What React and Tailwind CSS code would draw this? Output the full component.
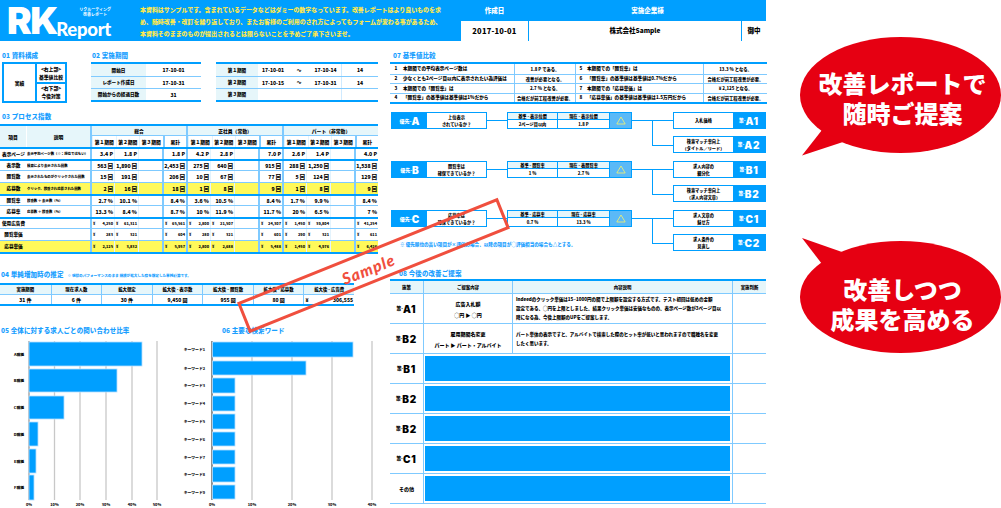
import React from "react";

const FONT = { fontFamily: '"Noto Sans CJK JP", "Noto Sans", sans-serif' };

function Title({ children, className = "" }) {
  return <div className={"text-[6.5px] leading-[8px] font-black text-[#1a9fff] whitespace-nowrap tracking-[0.1px] " + className}>{children}</div>;
}

function Plan({ code }) {
  return (
    <span className="inline-flex items-center whitespace-nowrap leading-none">
      <span className="text-[4.6px] font-black">策-</span>
      <span className="text-[10px] font-black tracking-[0.8px]" style={{ fontFamily: "Inter, sans-serif" }}>{code}</span>
    </span>
  );
}

function Header() {
  return (
    <div className="h-[41px] w-[766px] bg-[#009fff] flex">
      <div className="w-[140px] flex pl-[7px] text-white">
        <div className="w-[47px] text-[37px] leading-[40px] font-black tracking-[-1.5px] mt-[1px]" style={{ fontFamily: "Inter, sans-serif" }}>RK</div>
        <div className="ml-[5px] flex flex-col items-end w-[52px]">
          <div className="text-[4px] leading-[6px] font-bold mt-[6px] whitespace-nowrap">リクルーティング</div>
          <div className="text-[4px] leading-[5px] font-bold whitespace-nowrap mr-[4px]">改善レポート</div>
          <div className="text-[18.5px] leading-[18px] font-black tracking-[-0.3px] mt-[3px]" style={{ fontFamily: "Lato, sans-serif" }}>Report</div>
        </div>
      </div>
      <div className="w-[321px] pt-[4px] text-[5.95px] leading-[12px] font-black text-[#ffe94d] whitespace-nowrap">
        <div>本資料はサンプルです。含まれているデータなどはダミーの数字なっています。改善レポートはより良いものを求</div>
        <div>め、随時改善・改訂を繰り返しており、またお客様のご利用のされ方によってもフォームが変わる事があるため、</div>
        <div>本資料そのままのものが提出されるとは限らないことを予めご了承下さいませ。</div>
      </div>
      <div className="w-[305px] grid grid-cols-[67px_212px_24px] grid-rows-[21px_20px] gap-x-[1px] text-[6.5px] font-black">
        <div className="flex items-center justify-center text-white">作成日</div>
        <div className="col-span-2 flex items-center justify-center text-white">実施企業様</div>
        <div className="bg-white flex items-center justify-center text-[7.5px] tracking-[0.2px] text-black">2017-10-01</div>
        <div className="bg-white flex items-center justify-center text-black">株式会社Sample</div>
        <div className="bg-white flex items-center justify-center text-black">御中</div>
      </div>
    </div>
  );
}

function Structure() {
  return (
    <div className="w-[65px] h-[41px] border-2 border-[#009fff] flex text-[4.8px] leading-[8px] font-black text-black text-center">
      <div className="w-[31px] flex items-center justify-center">実績</div>
      <div className="flex-1 border-l-2 border-[#009fff] flex flex-col">
        <div className="flex-1 flex flex-col justify-center border-b-2 border-[#009fff]">
          <div>&lt;右上部&gt;</div>
          <div>基準値比較</div>
        </div>
        <div className="flex-1 flex flex-col justify-center">
          <div>&lt;右下部&gt;</div>
          <div>今後対策</div>
        </div>
      </div>
    </div>
  );
}

function PeriodA() {
  const rows = [["開始日", "17-10-01"], ["レポート作成日", "17-10-31"], ["開始からの経過日数", "31"]];
  return (
    <div className="w-[110px] border-t-2 border-b-2 border-[#009fff]">
      {rows.map((r, i) => (
        <div key={r[0]} className={"grid grid-cols-[55px_55px] h-[12px] text-[4.6px] font-black text-black " + (i ? "border-t border-[#7fcaff]" : "")}>
          <div className="bg-[#e6f6fa] flex items-center justify-center whitespace-nowrap">{r[0]}</div>
          <div className="flex items-center justify-center text-[5px]">{r[1]}</div>
        </div>
      ))}
    </div>
  );
}

function PeriodB() {
  const rows = [["第１期間", "17-10-01", "〜", "17-10-14", "14"], ["第２期間", "17-10-15", "〜", "17-10-31", "14"], ["第３期間", "", "", "", ""]];
  return (
    <div className="w-[162px] border-t-2 border-b-2 border-[#009fff]">
      {rows.map((r, i) => (
        <div key={r[0]} className={"grid grid-cols-[42px_30px_22px_31px_37px] h-[12px] text-[4.6px] font-black text-black " + (i ? "border-t border-[#7fcaff]" : "")}>
          <div className="bg-[#e6f6fa] flex items-center justify-center">{r[0]}</div>
          <div className="flex items-center justify-center text-[5px]">{r[1]}</div>
          <div className="flex items-center justify-center">{r[2]}</div>
          <div className="flex items-center justify-center text-[5px]">{r[3]}</div>
          <div className="flex items-center justify-center text-[5px] border-l border-[#cfeaff]">{r[4]}</div>
        </div>
      ))}
    </div>
  );
}

const PROCESS = [
  { n: "表示ページ", d: "表示平均ページ数（※：掲位ではない）", h: "h-[12px]", b: "border-t-2 border-[#009fff]", v: ["3.4 P", "1.8 P", "", "1.8 P", "4.2 P", "2.8 P", "", "7.0 P", "2.6 P", "1.4 P", "", "4.0 P"] },
  { n: "表示数", d: "検索により表示された回数", h: "h-[11px]", b: "border-t-2 border-[#009fff]", v: ["563 回", "1,890 回", "", "2,453 回", "275 回", "640 回", "", "915 回", "288 回", "1,250 回", "", "1,538 回"] },
  { n: "閲覧数", d: "表示されたものがクリックされた回数", h: "h-[12px]", b: "border-t border-[#7fcaff]", v: ["15 回", "191 回", "", "206 回", "10 回", "67 回", "", "77 回", "5 回", "124 回", "", "129 回"] },
  { n: "応募数", d: "クリック、閲覧され応募された回数", h: "h-[12px]", y: true, b: "border-t border-[#7fcaff]", v: ["2 回", "16 回", "", "18 回", "1 回", "8 回", "", "9 回", "1 回", "8 回", "", "9 回"] },
  { n: "閲覧率", d: "閲覧数 ÷ 表示数（%）", h: "h-[11px]", b: "border-t-2 border-[#009fff]", v: ["2.7 %", "10.1 %", "", "8.4 %", "3.6 %", "10.5 %", "", "8.4 %", "1.7 %", "9.9 %", "", "8.4 %"] },
  { n: "応募率", d: "応募数 ÷ 閲覧数（%）", h: "h-[12px]", b: "border-t border-[#7fcaff]", v: ["13.3 %", "8.4 %", "", "8.7 %", "10 %", "11.9 %", "", "11.7 %", "20 %", "6.5 %", "", "7 %"] },
  { n: "使用広告費", d: "", h: "h-[11px]", yen: true, b: "border-t-2 border-[#009fff]", v: ["4,250", "61,311", "", "65,561", "2,800", "21,507", "", "24,307", "1,450", "39,804", "", "41,254"] },
  { n: "閲覧単価", d: "", h: "h-[12px]", yen: true, b: "border-t border-[#7fcaff]", v: ["283", "321", "", "604", "280", "321", "", "601", "290", "321", "", "611"] },
  { n: "応募単価", d: "", h: "h-[12px]", yen: true, y: true, b: "border-t border-[#7fcaff]", v: ["2,125", "3,832", "", "5,957", "2,800", "2,688", "", "5,488", "1,450", "4,976", "", "6,426"] },
];

function ProcessTable() {
  const heads = ["総合", "正社員（常勤）", "パート（非常勤）"];
  const sub = ["第１期間", "第２期間", "第３期間", "累計"];
  return (
    <div className="w-[378px] border-t-2 border-b-2 border-[#009fff] text-black font-black">
      <div className="grid grid-cols-[27px_63px_288px] bg-[#e6f6fa] text-[4.8px]">
        <div className="flex items-center justify-center border-r border-white">項目</div>
        <div className="flex items-center justify-center">説明</div>
        <div className="grid grid-cols-3">
          {heads.map((h) => (
            <div key={h} className="border-l-2 border-[#7fcaff]">
              <div className="h-[10px] flex items-center justify-center border-b border-[#7fcaff]">{h}</div>
              <div className="h-[11px] grid grid-cols-4 bg-white">
                {sub.map((s, i) => (
                  <div key={s} className={"flex items-center justify-center whitespace-nowrap " + (i === 3 ? "border-l-2 border-[#7fcaff]" : "border-l border-[#e3f3fd]")}>{s}</div>
                ))}
              </div>
            </div>
          ))}
        </div>
      </div>
      {PROCESS.map((r) => (
        <div key={r.n} className={"grid grid-cols-[27px_63px_repeat(12,24px)] " + r.h + " " + r.b + " " + (r.y ? "bg-[#fff95a]" : "")}>
          <div className="flex items-center justify-center text-[4.6px] whitespace-nowrap">{r.n}</div>
          <div className="flex items-center text-[3.4px] whitespace-nowrap overflow-hidden">{r.d}</div>
          {r.v.map((v, i) => (
            <div key={i} className={"flex items-center whitespace-nowrap overflow-hidden pr-[1px] " + (i % 4 === 0 || i % 4 === 3 ? "border-l-2 border-[#7fcaff] " : "border-l border-[#e3f3fd] ") + (r.yen ? "justify-between text-[3.8px] pl-[1px]" : "justify-end text-[5.2px] pr-[1px]")}>
              {r.yen && v ? <span>¥</span> : null}
              <span>{v}</span>
            </div>
          ))}
        </div>
      ))}
    </div>
  );
}

function Estimate() {
  const heads = ["実施期間", "現在求人数", "拡大想定", "拡大後 - 表示数", "拡大後 - 閲覧数", "拡大後 - 応募数", "拡大後 - 広告費"];
  const vals = ["31 件", "6 件", "30 件", "9,450 回", "955 回", "80 回"];
  return (
    <div className="w-[354px] border-t-2 border-b-2 border-[#009fff] text-black font-black">
      <div className="grid grid-cols-7 h-[9px] bg-[#e6f6fa] text-[4.4px]">
        {heads.map((h, i) => (
          <div key={h} className={"flex items-center justify-center whitespace-nowrap " + (i ? "border-l border-[#7fcaff]" : "")}>{h}</div>
        ))}
      </div>
      <div className="grid grid-cols-7 h-[10px] text-[5px] border-t border-[#7fcaff]">
        {vals.map((v, i) => (
          <div key={v} className={"flex items-center justify-center " + (i ? "border-l border-[#7fcaff]" : "")}>{v}</div>
        ))}
        <div className="flex items-center justify-between border-l border-[#7fcaff] px-[1px]">
          <span>¥</span>
          <span>306,555</span>
        </div>
      </div>
    </div>
  );
}

function Chart05() {
  const bars = [["A職種", 342, 366, 142], ["B職種", 369, 392, 117], ["C職種", 396, 419, 64], ["D職種", 422, 446, 38], ["E職種", 449, 473, 36], ["F職種", 475, 500, 34]];
  const ticks = [29, 54.5, 80, 106, 132, 157];
  return (
    <svg width="180" height="167" viewBox="0 341 180 167" className="block shrink-0">
      {ticks.map((x, i) => (
        <g key={x}>
          <line x1={x} x2={x} y1="341" y2="500" stroke={i ? "#c8c8c8" : "#9a9a9a"} strokeWidth="1.3" />
          <text x={x} y="505.5" textAnchor="middle" fontSize="3.8" fontWeight="900" fill="#111">{i * 10}%</text>
        </g>
      ))}
      {bars.map((b) => (
        <g key={b[0]}>
          <rect x="29" y={b[1]} width={b[3] - 29} height={b[2] - b[1]} fill="#009fff" stroke="#b5dfff" strokeWidth="0.8" />
          <text x="24" y={(b[1] + b[2]) / 2 + 1.5} textAnchor="end" fontSize="3.8" fontWeight="900" fill="#111">{b[0]}</text>
        </g>
      ))}
    </svg>
  );
}

function Chart06() {
  const bars = [[342, 357, 353], [361, 375, 306], [378, 393, 235], [396, 411, 235], [414, 429, 235], [432, 446, 235], [450, 464, 235], [467, 482, 235], [485, 499, 235]];
  const ticks = [212, 252, 292, 332, 372];
  return (
    <svg width="210" height="167" viewBox="180 341 210 167" className="block shrink-0">
      {ticks.map((x, i) => (
        <g key={x}>
          <line x1={x} x2={x} y1="341" y2="500" stroke={i ? "#c8c8c8" : "#777"} strokeWidth={i ? 1.3 : 1.6} />
          <text x={x} y="505.5" textAnchor="middle" fontSize="3.8" fontWeight="900" fill="#111">{i * 10}%</text>
        </g>
      ))}
      {bars.map((b, i) => (
        <g key={i}>
          <rect x="212.5" y={b[0]} width={b[2] - 212.5} height={b[1] - b[0]} fill="#009fff" stroke="#b5dfff" strokeWidth="0.8" />
          <text x="205" y={(b[0] + b[1]) / 2 + 1.5} textAnchor="end" fontSize="3.8" fontWeight="900" fill="#111">キーワード{i + 1}</text>
        </g>
      ))}
    </svg>
  );
}

const COMPARE = [
  ["1", "本期間での平均表示ページ数は", "1.8 P  である。", "5", "本期間での「閲覧率」は", "13.3 %  となる。"],
  ["2", "少なくとも2ページ目以内に表示されたい為評価は", "改善が必要となる。", "6", "「閲覧率」の基準値は基準値は0.7%だから", "合格だが前工程改善が必要。"],
  ["3", "本期間での「閲覧率」は", "2.7 %  となる。", "7", "本期間での「応募単価」は", "¥  2,125  となる。"],
  ["4", "「閲覧率」の基準値は基準値は1%だから", "合格だが前工程改善が必要。", "8", "「応募単価」の基準値は基準値は1.5万円だから", "合格だが前工程改善が必要。"],
];

function Compare() {
  return (
    <div className="w-[377px] border-t-2 border-b-2 border-[#009fff] text-black font-black text-[4.6px]">
      {COMPARE.map((r, i) => (
        <div key={r[0]} className={"grid grid-cols-[12px_112px_62px_10px_117px_64px] h-[9.5px] " + (i ? "border-t border-[#7fcaff]" : "")}>
          <div className="flex items-center justify-center">{r[0]}</div>
          <div className="flex items-center whitespace-nowrap pl-[1px]">{r[1]}</div>
          <div className="flex items-center justify-center whitespace-nowrap border-l border-r border-[#7fcaff] text-[4.3px]">{r[2]}</div>
          <div className="flex items-center justify-center">{r[3]}</div>
          <div className="flex items-center whitespace-nowrap pl-[1px]">{r[4]}</div>
          <div className="flex items-center justify-center whitespace-nowrap border-l border-[#7fcaff] text-[4.3px]">{r[5]}</div>
        </div>
      ))}
    </div>
  );
}

function HLine({ w }) {
  return <div className={"h-[9px] border-b-[1.5px] border-[#009fff] " + w}></div>;
}

function ActionBox({ lines, code }) {
  return (
    <div className="w-[93px] h-[17px] border border-[#009fff] flex">
      <div className="w-[59px] flex flex-col items-center justify-center text-[4.2px] leading-[6.4px] font-black text-black whitespace-nowrap">
        {lines.map((l) => <div key={l}>{l}</div>)}
      </div>
      <div className="flex-1 bg-[#009fff] text-white flex items-center justify-center">
        <Plan code={code} />
      </div>
    </div>
  );
}

const FLOW = [
  { p: "A", q: ["上位表示", "されているか？"], h: ["基準 - 表示位置", "現在 - 表示位置"], v: ["2ページ目以内", "1.8 P"], a: [["入札価格"], ["検索マッチ率向上", "（タイトル／リード）"]], c: ["A1", "A2"] },
  { p: "B", q: ["閲覧率は", "確保できているか？"], h: ["基準 - 閲覧率", "現在 - 表閲覧率"], v: ["1 %", "2.7 %"], a: [["求人内容の", "細分化"], ["検索マッチ率向上", "（求人内容文章）"]], c: ["B1", "B2"] },
  { p: "C", q: ["応募率は", "確保できているか？"], h: ["基準 - 応募率", "現在 - 応募率"], v: ["0.7 %", "13.3 %"], a: [["求人文章の", "魅せ方"], ["求人条件の", "見直し"]], c: ["C1", "C2"] },
];

function Flow({ f }) {
  return (
    <div className="flex h-[41px] mb-[8px] pl-[1px]">
      <div className="w-[96px] h-[17px] border border-[#009fff] flex shrink-0">
        <div className="w-[35px] bg-[#009fff] text-white flex items-center justify-center whitespace-nowrap leading-none">
          <span className="text-[5px] font-black">優先-</span>
          <span className="text-[10px] font-black" style={{ fontFamily: "Inter, sans-serif" }}>{f.p}</span>
        </div>
        <div className="flex-1 flex flex-col items-center justify-center text-[4.2px] leading-[6.4px] font-black text-black whitespace-nowrap">
          {f.q.map((l) => <div key={l}>{l}</div>)}
        </div>
      </div>
      <HLine w="w-[20px] shrink-0" />
      <div className="w-[125px] h-[17px] border border-[#009fff] grid grid-cols-[50px_51px_22px] shrink-0 text-[4.2px] font-black text-black">
        <div className="flex flex-col border-r border-[#009fff]">
          <div className="h-[7px] bg-[#e6f6fa] border-b border-[#009fff] flex items-center justify-center">{f.h[0]}</div>
          <div className="flex-1 flex items-center justify-center">{f.v[0]}</div>
        </div>
        <div className="flex flex-col">
          <div className="h-[7px] bg-[#e6f6fa] border-b border-[#009fff] flex items-center justify-center">{f.h[1]}</div>
          <div className="flex-1 flex items-center justify-center">{f.v[1]}</div>
        </div>
        <div className="bg-[#5bb9f7] flex items-center justify-center border-l border-[#009fff]">
          <svg width="10" height="9" viewBox="0 0 10 9">
            <path d="M5 1 L9.2 8 L0.8 8 Z" fill="none" stroke="#e6ec7a" strokeWidth="0.9" />
          </svg>
        </div>
      </div>
      <div className="w-[41px] shrink-0 flex flex-col">
        <HLine w="w-full" />
        <div className="ml-[20px] w-[21px] h-[25px] border-l-[1.5px] border-b-[1.5px] border-[#009fff]"></div>
      </div>
      <div className="flex flex-col gap-[7px]">
        <ActionBox lines={f.a[0]} code={f.c[0]} />
        <ActionBox lines={f.a[1]} code={f.c[1]} />
      </div>
    </div>
  );
}

function Proposal() {
  const rows = ["B1", "B2", "B2", "C1", "その他"];
  return (
    <div className="w-[376px] border-t-2 border-[#009fff] text-black font-black border-b border-b-[#7fcaff]">
      <div className="grid grid-cols-[33px_89px_220px_34px] h-[13px] bg-[#e6f6fa] text-[4.4px] border-b border-[#7fcaff]">
        {["施策", "ご提案内容", "内容説明", "実施判断"].map((h, i) => (
          <div key={h} className={"flex items-center justify-center " + (i ? "border-l border-[#7fcaff]" : "")}>{h}</div>
        ))}
      </div>
      <div className="grid grid-cols-[33px_89px_220px_34px] h-[30px] border-b border-[#7fcaff]">
        <div className="flex items-center justify-center"><Plan code="A1" /></div>
        <div className="border-l border-[#7fcaff] flex flex-col items-center justify-center text-[5px] leading-[11px]">
          <div>広告入札額</div>
          <div>◯円 ▶ ◯円</div>
        </div>
        <div className="border-l border-[#7fcaff] px-[3px] flex flex-col justify-center text-[4.5px] leading-[8.8px] whitespace-nowrap overflow-hidden">
          <div>Indeedのクリック単価は15~1000円の間で上限額を設定する方式です。テスト初回は低めの金額</div>
          <div>設定である、◯円を上限としました。結果クリック単価は安価なものの、表示ページ数が3ページ目以</div>
          <div>降になる為、今後上限額のUPをご提案します。</div>
        </div>
        <div className="border-l border-[#7fcaff]"></div>
      </div>
      <div className="grid grid-cols-[33px_89px_220px_34px] h-[30px] border-b border-[#7fcaff]">
        <div className="flex items-center justify-center"><Plan code="B2" /></div>
        <div className="border-l border-[#7fcaff] flex flex-col items-center justify-center text-[5px] leading-[11px] whitespace-nowrap">
          <div>雇用期間名変更</div>
          <div>パート ▶ パート・アルバイト</div>
        </div>
        <div className="border-l border-[#7fcaff] px-[3px] flex flex-col justify-center text-[4.5px] leading-[8.8px] whitespace-nowrap overflow-hidden">
          <div>パート単体の表示ですと、アルバイトで検索した際のヒット率が低いと思われますので職種名を変更</div>
          <div>したく思います。</div>
        </div>
        <div className="border-l border-[#7fcaff]"></div>
      </div>
      {rows.map((r, i) => (
        <div key={i} className={"grid grid-cols-[33px_309px_34px] " + (i < rows.length - 1 ? "h-[30px] border-b border-[#7fcaff]" : "h-[29px]")}>
          <div className="flex items-center justify-center">
            {r === "その他" ? <span className="text-[5px]">{r}</span> : <Plan code={r} />}
          </div>
          <div className="border-l border-[#7fcaff] pl-[1px] pr-[2px] py-[2px]">
            <div className="bg-[#009fff] h-full"></div>
          </div>
          <div className="border-l border-[#7fcaff]"></div>
        </div>
      ))}
    </div>
  );
}

function Callouts() {
  const line = "text-[24px] leading-[30px] font-black text-white whitespace-nowrap";
  return (
    <div className="relative w-[231px] h-[508px] shrink-0">
      <svg width="231" height="508" viewBox="0 0 231 508" className="absolute inset-0">
        <ellipse cx="130.5" cy="95" rx="100.5" ry="58" fill="#e60012" />
        <path d="M32 155.6 L52 130 L73 142 Z" fill="#e60012" />
        <ellipse cx="130.5" cy="297" rx="100.5" ry="56" fill="#e60012" />
        <path d="M32 238 L72 252 L52 264 Z" fill="#e60012" />
      </svg>
      <div className="relative ml-[32px] w-[201px] text-center pt-[68px]">
        <div className={line}>改善レポートで</div>
        <div className={line}>随時ご提案</div>
        <div className={line + " mt-[146px]"}>改善しつつ</div>
        <div className={line}>成果を高める</div>
      </div>
    </div>
  );
}

export default function App() {
  return (
    <div className="relative w-[1001px] h-[508px] flex bg-white overflow-hidden" style={FONT}>
      <div className="w-[770px] shrink-0 flex flex-col">
        <Header />
        <div className="flex">
          <div className="w-[390px] shrink-0 flex flex-col">
            <div className="flex pt-[10px]">
              <div className="w-[91px] pl-[2px]">
                <Title className="h-[11px]">01 資料構成</Title>
                <Structure />
              </div>
              <div>
                <Title className="h-[11px] pl-[1px]">02 実施期間</Title>
                <div className="flex gap-[15px]">
                  <PeriodA />
                  <PeriodB />
                </div>
              </div>
            </div>
            <Title className="mt-[9px] h-[12px] pl-[2px]">03 プロセス指数</Title>
            <ProcessTable />
            <div className="mt-[16px] h-[13px] pl-[1px] flex items-baseline gap-[4px]">
              <Title>04 単純増加時の推定</Title>
              <span className="text-[3.6px] font-black text-[#1a9fff] whitespace-nowrap">※ 現状のパフォーマンスのまま 規模が拡大した際を想定した単純計算です。</span>
            </div>
            <Estimate />
            <div className="mt-[20px] h-[15px] flex">
              <Title className="w-[222px] pl-[1px]">05 全体に対する求人ごとの問い合わせ比率</Title>
              <Title>06 主要な検索ワード</Title>
            </div>
            <div className="flex">
              <Chart05 />
              <Chart06 />
            </div>
          </div>
          <div className="w-[380px] shrink-0 flex flex-col">
            <Title className="pt-[10px] h-[21px] pl-[3px]">07 基準値比較</Title>
            <Compare />
            <div className="mt-[8px]">
              {FLOW.map((f) => <Flow key={f.p} f={f} />)}
            </div>
            <div className="-mt-[19px] pl-[10px] h-[30px] text-[4.6px] leading-[8px] font-black text-[#1a9fff] whitespace-nowrap">※ 優先順位の高い項目が×評価の場合、以降の項目が◯評価相当の場合も△とする。</div>
            <Title className="h-[8px] pl-[9px] mt-[-1px]">08 今後の改善ご提案</Title>
            <div className="mt-[2px]">
              <Proposal />
            </div>
          </div>
        </div>
      </div>
      <Callouts />
      <div className="absolute left-[233px] top-[249px] w-[281px] h-[33px] border-[3px] border-[#f04f3e] rotate-[-21.9deg] flex items-center justify-center pointer-events-none">
        <span className="text-[16px] leading-[20px] font-black italic tracking-[1px] text-[#f04f3e] mt-[2px] ml-[-12px]" style={{ fontFamily: "Lato, sans-serif" }}>Sample</span>
      </div>
    </div>
  );
}
